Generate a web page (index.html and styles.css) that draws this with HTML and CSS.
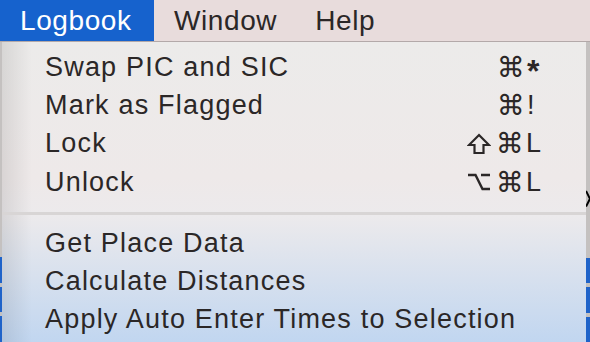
FILE: index.html
```html
<!DOCTYPE html>
<html lang="en">
<head>
  <meta charset="utf-8">
  <title>Logbook menu</title>
  <link rel="stylesheet" href="styles.css">
</head>
<body>
  <nav class="menubar">
    <span class="menubar-item menubar-item-active">Logbook</span>
    <span class="menubar-item">Window</span>
    <span class="menubar-item">Help</span>
  </nav>
  <div class="screen">
    <div class="edge edge-left">
      <span class="cell"></span>
      <span class="cell"></span>
      <span class="cell"></span>
    </div>
    <ul class="menu">
      <li class="menu-item">
        <span>Swap PIC and SIC</span>
        <kbd class="keys"><span class="key-cmd">⌘</span><span class="key key-star">*</span></kbd>
      </li>
      <li class="menu-item">
        <span>Mark as Flagged</span>
        <kbd class="keys"><span class="key-cmd">⌘</span><span class="key">!</span></kbd>
      </li>
      <li class="menu-item">
        <span>Lock</span>
        <kbd class="keys">
          <svg class="key-mod" width="24" height="24" viewBox="0 0 24 24" fill="none" stroke="currentColor" stroke-width="2.2" stroke-linejoin="miter">
            <path d="M12 3 L22 13 H16.5 V21 H7.5 V13 H2 Z"/>
          </svg>
          <span class="key-cmd">⌘</span><span class="key">L</span>
        </kbd>
      </li>
      <li class="menu-item">
        <span>Unlock</span>
        <kbd class="keys">
          <svg class="key-mod" width="24" height="24" viewBox="0 0 24 24" fill="none" stroke="currentColor" stroke-width="2.4">
            <path d="M1 5 H8.5 L15.5 19 H23 M14 5 H23"/>
          </svg>
          <span class="key-cmd">⌘</span><span class="key">L</span>
        </kbd>
      </li>
      <li class="menu-separator"></li>
      <li class="menu-item"><span>Get Place Data</span></li>
      <li class="menu-item"><span>Calculate Distances</span></li>
      <li class="menu-item"><span>Apply Auto Enter Times to Selection</span></li>
    </ul>
    <div class="edge edge-right">
      <svg class="close" width="4" height="20" viewBox="0 0 4 20" fill="none" stroke="#000000" stroke-width="2">
        <path d="M0 2 L4 10 L0 18"/>
      </svg>
      <span class="cell"></span>
      <span class="cell"></span>
      <span class="cell"></span>
    </div>
  </div>
</body>
</html>
```

FILE: styles.css
```css
*, *::before, *::after {
  margin: 0;
  padding: 0;
  box-sizing: border-box;
}

body {
  width: 590px;
  height: 342px;
  overflow: hidden;
  background-color: #c9c6c5;
  color: #2b2727;
  font-family: "Liberation Sans", Arial, sans-serif;
}

.menubar {
  display: flex;
  height: 42px;
  border-bottom: 1px solid #b3a9a9;
  background-color: #e8dcdc;
  font-size: 28px;
  letter-spacing: 0.6px;
}

.menubar-item {
  display: flex;
  align-items: center;
  padding: 0 18px 0 20px;
}

.menubar-item-active {
  width: 154px;
  background-color: #1662cd;
  color: #ffffff;
}

.screen {
  display: flex;
  height: 300px;
}

.edge {
  display: flex;
  flex-direction: column;
  background-color: #c4c1c0;
}

.edge-left {
  width: 2px;
  padding-top: 215px;
  gap: 4px;
}

.edge-right {
  width: 4px;
  padding-top: 147px;
  gap: 4px;
}

.cell {
  height: 26px;
  background-color: #1f63c9;
}

.close {
  margin-bottom: 45px;
}

.menu {
  flex: 1;
  list-style: none;
  padding-top: 6px;
  background: linear-gradient(90deg, rgba(0, 0, 0, 0.09), rgba(0, 0, 0, 0) 30px),
    linear-gradient(180deg, #ecebea 0%, #eee9e9 45%, #eceaec 58%, #c1d6f0 100%);
  font-size: 27px;
  letter-spacing: 1.2px;
}

.menu-item {
  display: flex;
  align-items: center;
  justify-content: space-between;
  height: 38.3px;
  padding: 0 45px 0 43px;
}

.keys {
  display: flex;
  align-items: center;
  justify-content: flex-end;
  font-family: "DejaVu Sans", sans-serif;
  font-size: 24px;
  letter-spacing: 0;
}

.key-mod {
  margin-right: 5px;
}

.key-cmd {
  width: 24px;
  margin-right: 6px;
  font-size: 28px;
  font-weight: 500;
  text-align: center;
}

.key {
  min-width: 14px;
  font-family: "Liberation Sans", Arial, sans-serif;
  font-size: 27px;
}

.key-star {
  font-size: 32px;
  font-weight: bold;
  line-height: 1;
  padding-top: 8px;
}

.menu-separator {
  height: 3px;
  margin: 11px 0 9px;
  background-color: #d8d5d5;
}
```
